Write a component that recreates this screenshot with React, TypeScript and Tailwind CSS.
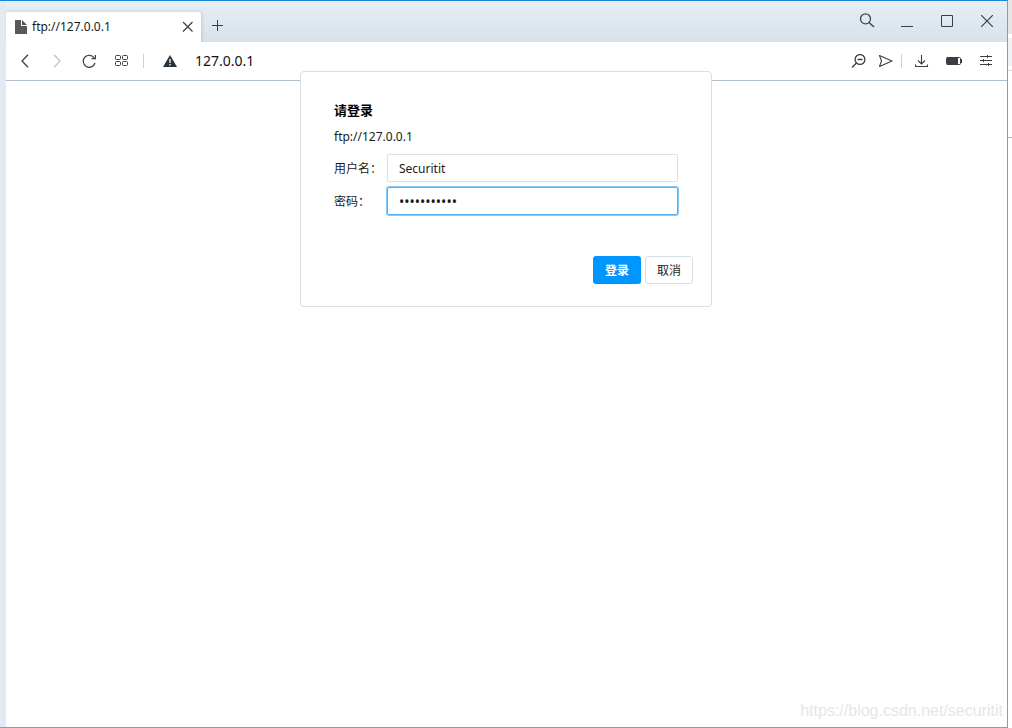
import { useState } from 'react'
import type { FormEvent, ReactNode } from 'react'

function IconButton({ label, className = '', children }: { label: string; className?: string; children: ReactNode }) {
  return (
    <button type="button" aria-label={label} className={`flex items-center justify-center shrink-0 h-5 ${className}`}>
      {children}
    </button>
  )
}

function TabBar() {
  return (
    <div className="flex h-[41px] bg-linear-to-b from-[#e6eef6] to-[#d9e1ea]">
      <div className="flex items-center mt-[11px] w-[195px] bg-white rounded-t-[2px] shadow-[1px_0_3px_rgba(90,110,130,0.25)] pl-2 pr-[7px]">
        <svg width="14" height="14" viewBox="0 0 14 14" className="shrink-0" fill="#58595b">
          <path d="M1 0h6v6h6v8h-12z" />
          <path d="M8 0l5 5h-5z" />
        </svg>
        <span className="flex-1 ml-1 text-[12px] leading-4 text-[#1a1a1a]">ftp://127.0.0.1</span>
        <IconButton label="关闭标签页" className="w-3">
          <svg width="12" height="12" viewBox="0 0 12 12" fill="none" stroke="#3a3f44" strokeWidth="1.2">
            <path d="M1 1l9.500 9.500M10.500 1l-9.500 9.500" />
          </svg>
        </IconButton>
      </div>
      <IconButton label="新建标签页" className="mt-[14px] ml-2 w-4">
        <svg width="12" height="12" viewBox="0 0 12 12" stroke="#3a3f44">
          <path d="M6.500 1v11M1 6.500h11" />
        </svg>
      </IconButton>

      <div className="ml-auto flex items-start gap-5 pt-[10px] pr-[10px]">
        <IconButton label="搜索" className="w-5">
          <svg width="16" height="16" viewBox="0 0 16 16" fill="none" stroke="#43494e" strokeWidth="1.3">
            <circle cx="6.500" cy="5.800" r="5" />
            <path d="M10 9.500l5 4.500" strokeWidth="1.600" />
          </svg>
        </IconButton>
        <IconButton label="最小化" className="w-5">
          <svg width="12" height="12" viewBox="0 0 12 12" stroke="#3a3f44">
            <path d="M0 11.500h12" />
          </svg>
        </IconButton>
        <IconButton label="最大化" className="w-5">
          <svg width="12" height="12" viewBox="0 0 12 12" fill="none" stroke="#3a3f44">
            <path d="M.5.5h11v11h-11z" />
          </svg>
        </IconButton>
        <IconButton label="关闭" className="w-5">
          <svg width="12" height="12" viewBox="0 0 12 12" stroke="#3a3f44" strokeWidth="1.2">
            <path d="M0 0l12 12M12 0l-12 12" />
          </svg>
        </IconButton>
      </div>
    </div>
  )
}

function Toolbar() {
  return (
    <div className="flex items-center h-[39px] bg-white border-b border-[#b1bfcc] pl-[9px] pr-[13px]">
      <div className="flex items-center gap-3">
        <IconButton label="后退" className="w-5">
          <svg width="8" height="14" viewBox="0 0 8 14" fill="none" stroke="#3a3f44" strokeWidth="1.3">
            <path d="M7 .8l-6 6.200 6 6.200" />
          </svg>
        </IconButton>
        <IconButton label="前进" className="w-5">
          <svg width="8" height="14" viewBox="0 0 8 14" fill="none" stroke="#c0c3c6" strokeWidth="1.3">
            <path d="M1 .8l6 6.200-6 6.200" />
          </svg>
        </IconButton>
        <IconButton label="刷新" className="w-5">
          <svg width="14" height="14" viewBox="0 0 14 14" fill="none" stroke="#3a3f44" strokeWidth="1.2">
            <path d="M13 9a6 6 0 1 1-.6-4.800" />
            <path d="M13.400 1v3.600h-3.800" />
          </svg>
        </IconButton>
        <IconButton label="快速拨号" className="w-5">
          <svg width="14" height="12" viewBox="0 0 14 12" fill="none" stroke="#3a3f44">
            <rect x="1.500" y=".5" width="5" height="4" rx="1" />
            <rect x="8.500" y=".5" width="5" height="4" rx="1" />
            <rect x="1.500" y="6.500" width="5" height="4" rx="1" />
            <rect x="8.500" y="6.500" width="5" height="4" rx="1" />
          </svg>
        </IconButton>
        <span className="w-px h-[14px] bg-[#cfd2d5]" />
      </div>
      <svg width="14" height="12" viewBox="0 0 14 12" className="ml-[19px] shrink-0">
        <path d="M7 0l7 12h-14z" fill="#27323b" />
        <path d="M7 4v4M7 9v1.500" stroke="#fff" strokeWidth="1.300" />
      </svg>
      <span className="ml-[18px] text-[14px] leading-5 text-[#111]">127.0.0.1</span>

      <div className="ml-auto flex items-center">
        <IconButton label="缩小" className="w-4">
          <svg width="16" height="14" viewBox="0 0 16 14" fill="none" stroke="#3a3f44" strokeWidth="1.300">
            <circle cx="10" cy="5.500" r="4.900" />
            <path d="M7.500 5.500h5M6.500 9l-4.500 4.500" />
          </svg>
        </IconButton>
        <IconButton label="发送到我的设备" className="w-4 ml-[11px]">
          <svg width="16" height="12" viewBox="0 0 16 12" fill="none" stroke="#3a3f44" strokeWidth="1.100">
            <path d="M2.500 .6l12.500 5.400-12.500 5.400 2-5.400z" strokeLinejoin="round" />
          </svg>
        </IconButton>
        <span className="w-px h-[14px] ml-2 bg-[#cfd2d5]" />
        <IconButton label="下载" className="w-4 ml-3">
          <svg width="14" height="14" viewBox="0 0 14 14" fill="none" stroke="#3a3f44">
            <path d="M6.500 1v9M3 6.500l3.500 3.500 3.500-3.500M.5 10.500v2h12v-2" strokeWidth="1.100" />
          </svg>
        </IconButton>
        <IconButton label="省电模式" className="w-4 ml-4">
          <svg width="16" height="8" viewBox="0 0 16 8">
            <rect x=".5" y=".5" width="14" height="7" rx="1" fill="#fff" stroke="#3a3f44" />
            <path d="M1 0h11v8h-11zM14 2h2v4h-2z" fill="#3a3f44" />
          </svg>
        </IconButton>
        <IconButton label="菜单" className="w-4 ml-4">
          <svg width="12" height="12" viewBox="0 0 12 12" stroke="#3a3f44">
            <path d="M0 1.500h12M0 5.500h12M0 9.500h12M7.500 0v3M3.500 4v3M8.500 8v3" />
          </svg>
        </IconButton>
      </div>
    </div>
  )
}

function LoginDialog() {
  const [username, setUsername] = useState('Securitit')
  const [password, setPassword] = useState('securitit12')

  function handleSubmit(e: FormEvent) {
    e.preventDefault()
  }

  return (
    <div className="absolute top-[70px] left-[5px] right-0 flex justify-center">
      <form
        onSubmit={handleSubmit}
        role="dialog"
        aria-labelledby="login-title"
        className="w-[412px] bg-white border border-[#d5e0e9] rounded-[4px] pl-[33px] pr-[18px] pt-7 pb-[22px] text-[12px] text-[#1a1a1a]"
      >
        <h1 id="login-title" className="text-[13px] leading-5 font-bold text-black">请登录</h1>
        <p className="mt-[9px] leading-4">ftp://127.0.0.1</p>
        <div className="grid grid-cols-[53px_1fr] items-center gap-y-[5px] mt-[9px] pr-[15px]">
          <label htmlFor="username" className="pt-0.5 whitespace-nowrap">用户名：</label>
          <input
            id="username"
            type="text"
            value={username}
            onChange={e => setUsername(e.target.value)}
            className="w-full min-w-0 h-7 px-[11px] border border-[#d5e0e9] rounded-[2px] outline-none"
          />
          <label htmlFor="password" className="pt-0.5 whitespace-nowrap">密码：</label>
          <input
            id="password"
            type="password"
            value={password}
            onChange={e => setPassword(e.target.value)}
            className="w-full min-w-0 h-7 px-[11px] text-[14px] border border-[#4fb0f5] rounded-[2px] outline-none ring-1 ring-[#86caf9]"
          />
        </div>
        <div className="flex justify-end gap-1 mt-[41px]">
          <button type="submit" className="w-12 h-7 pt-0.5 rounded-[3px] bg-[#0096ff] font-bold text-white">登录</button>
          <button type="button" className="w-12 h-7 pt-0.5 rounded-[3px] bg-white border border-[#d5e0e9]">取消</button>
        </div>
      </form>
    </div>
  )
}

export default function App() {
  return (
    <div className="flex h-screen bg-white font-['Noto_Sans','Noto_Sans_CJK_SC',sans-serif]">
      <div className="relative flex-1 flex flex-col min-w-0 border-t border-t-[#1883d7] border-r border-r-[#999] border-b border-b-[#999]">
        <div className="flex-1 flex flex-col bg-[#e2eaf3] pl-[6px]">
          <TabBar />
          <Toolbar />
          <main className="flex-1 flex items-end justify-end bg-white pr-1 pb-[6px]">
            <span className="font-['Liberation_Sans',sans-serif] text-[16px] leading-5 text-[#e6e6e6]">
              https://blog.csdn.net/securitit
            </span>
          </main>
        </div>
        <LoginDialog />
      </div>

      {/* edge of the window behind */}
      <div className="w-1 shrink-0">
        <div className="h-[34px] bg-[#e6e6e6]" />
        <div className="h-7 mt-1 bg-[#f1f2f3]" />
        <div className="h-[68px] mt-1 border-y border-t-[#d9d9d9] border-b-[#b5b5b5]" />
      </div>
    </div>
  )
}
